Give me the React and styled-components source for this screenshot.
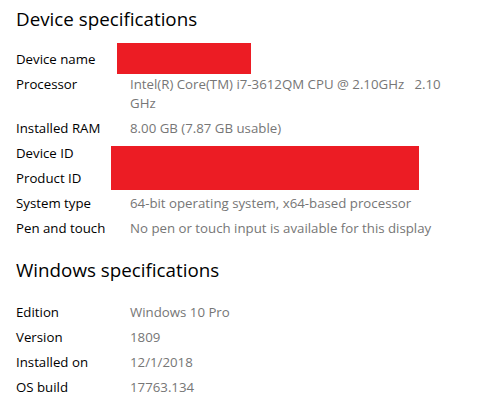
import React from "react";
import styled, { createGlobalStyle } from "styled-components";

const Global = createGlobalStyle`
  html, body { margin: 0; padding: 0; background: #fff; }
  body { font-family: "Open Sans", "Noto Sans", sans-serif; }
`;

const Page = styled.div`
  padding: 5px 0 0 16px;
  width: 479px;
  height: 406px;
  box-sizing: border-box;
  overflow: hidden;
`;

const Heading = styled.h2`
  margin: ${(p) => p.$top || 0}px 0 ${(p) => p.$bottom || 14}px;
  font-size: 18.8px;
  line-height: 28px;
  font-weight: 400;
  color: #000;
`;

const List = styled.div`
  display: flex;
  flex-direction: column;
`;

const Row = styled.div`
  position: relative;
  display: grid;
  grid-template-columns: 114px 325px;
  padding: 3px 0;
  font-size: 13.25px;
  line-height: 19px;
`;

const Label = styled.div`
  color: #000;
`;

const Value = styled.div`
  color: #767676;
  white-space: pre-wrap;
`;

const Redact = styled.div`
  position: absolute;
  z-index: 1;
  left: ${(p) => p.$x}px;
  top: ${(p) => p.$y}px;
  width: ${(p) => p.$w}px;
  height: ${(p) => p.$h}px;
  background: #ec1c24;
`;

const device = [
  { label: "Device name", value: "", redact: { x: 101, y: -4.5, w: 134, h: 31 } },
  { label: "Processor", value: "Intel(R) Core(TM) i7-3612QM CPU @ 2.10GHz   2.10 GHz" },
  { label: "Installed RAM", value: "8.00 GB (7.87 GB usable)" },
  { label: "Device ID", value: "", redact: { x: 95, y: 4.5, w: 308, h: 44 } },
  { label: "Product ID", value: "" },
  { label: "System type", value: "64-bit operating system, x64-based processor" },
  { label: "Pen and touch", value: "No pen or touch input is available for this display" },
];

const windows = [
  { label: "Edition", value: "Windows 10 Pro" },
  { label: "Version", value: "1809" },
  { label: "Installed on", value: "12/1/2018" },
  { label: "OS build", value: "17763.134" },
];

function Specs({ rows }) {
  return (
    <List>
      {rows.map((r) => (
        <Row key={r.label}>
          <Label>{r.label}</Label>
          <Value>{r.value}</Value>
          {r.redact && <Redact $x={r.redact.x} $y={r.redact.y} $w={r.redact.w} $h={r.redact.h} />}
        </Row>
      ))}
    </List>
  );
}

export default function App() {
  return (
    <>
      <Global />
      <Page>
        <Heading>Device specifications</Heading>
        <Specs rows={device} />
        <Heading $top={15} $bottom={16}>Windows specifications</Heading>
        <Specs rows={windows} />
      </Page>
    </>
  );
}
